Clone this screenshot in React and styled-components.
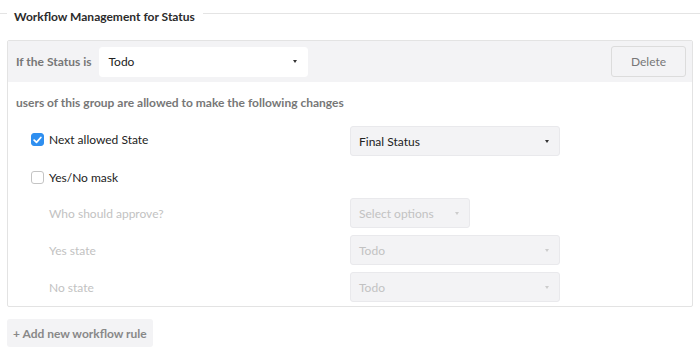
import styled, { createGlobalStyle } from 'styled-components'

const Global = createGlobalStyle`
  body {
    margin: 0;
    background: #fff;
    font-family: 'Lato', 'Open Sans', sans-serif;
    font-size: 12px;
    color: #333;
  }
`

const Page = styled.div`
  width: 700px;
  padding: 0 8px 0 7px;
  box-sizing: border-box;
`

const TitleRow = styled.div`
  display: flex;
  align-items: flex-start;
  margin: 0 -8px 0 -7px;
  height: 27px;
`

const Rule = styled.span`
  flex: ${p => (p.$short ? '0 0 7px' : '1')};
  margin-top: 13px;
  border-top: 1px solid #e4e4e4;
`

const Title = styled.h2`
  margin: 9px 0 0;
  padding: 0 8px 0 7px;
  font-size: 12px;
  font-weight: 700;
  line-height: 15px;
  color: #2b2b2b;
`

const Panel = styled.div`
  margin-top: 13px;
  border: 1px solid #e3e3e3;
  border-radius: 2px;
  width: 686px;
  box-sizing: border-box;
`

const Header = styled.div`
  display: flex;
  align-items: center;
  background: #f3f3f5;
  height: 41px;
  padding: 0 6px 0 8px;
`

const HeaderLabel = styled.span`
  font-weight: 700;
  color: #777;
  margin-right: 8px;
`

const Select = styled.div`
  display: flex;
  align-items: center;
  justify-content: space-between;
  box-sizing: border-box;
  width: ${p => p.$w}px;
  height: 30px;
  padding: 0 10px 0 8px;
  border-radius: 3px;
  background: ${p => (p.$white ? '#fff' : '#f3f3f5')};
  border: 1px solid ${p => (p.$white ? '#fff' : '#e9e9ec')};
  color: ${p => (p.$disabled ? '#c2c2c2' : '#222')};
`

const Caret = styled.span`
  width: 0;
  height: 0;
  border-left: 2.5px solid transparent;
  border-right: 2.5px solid transparent;
  border-top: 3px solid ${p => (p.$disabled ? '#ccc' : '#333')};
`

const DeleteButton = styled.button`
  margin-left: auto;
  width: 75px;
  height: 31px;
  background: #f3f3f5;
  border: 1px solid #dcdcdc;
  border-radius: 3px;
  font-family: inherit;
  font-size: 12px;
  color: #777;
`

const Body = styled.div`
  padding: 13px 8px 4px 8px;
`

const Intro = styled.div`
  font-weight: 700;
  color: #777;
  line-height: 15px;
  margin-bottom: 16px;
`

const Row = styled.div`
  display: grid;
  grid-template-columns: 319px 1fr;
  align-items: center;
  height: 30px;
  margin-bottom: ${p => p.$gap ?? 7}px;
  padding-left: 15px;
`

const CheckLabel = styled.label`
  display: flex;
  align-items: center;
  gap: 5px;
  color: #222;
  margin-top: -3px;
`

const Box = styled.span`
  width: 13px;
  height: 13px;
  box-sizing: border-box;
  border-radius: 3px;
  display: inline-flex;
  align-items: center;
  justify-content: center;
  background: ${p => (p.$on ? '#2f8ff0' : '#fff')};
  border: 1px solid ${p => (p.$on ? '#2f8ff0' : '#c4c4c4')};
`

const SubLabel = styled.div`
  padding-left: 18px;
  color: #c2c2c2;
`

const AddButton = styled.button`
  margin-top: 12px;
  height: 28px;
  padding: 0 6px;
  background: #f3f3f5;
  border: none;
  border-radius: 3px;
  font-family: inherit;
  font-size: 12px;
  font-weight: 700;
  color: #888;
`

const Check = () => (
  <svg width="9" height="8" viewBox="0 0 9 8">
    <path d="M1.2 4.2 L3.5 6.3 L7.8 1.5" fill="none" stroke="#fff" strokeWidth="1.8" strokeLinecap="round" strokeLinejoin="round" />
  </svg>
)

const Dropdown = ({ value, width = 210, white, disabled }) => (
  <Select $w={width} $white={white} $disabled={disabled}>
    <span>{value}</span>
    <Caret $disabled={disabled} />
  </Select>
)

export default function App() {
  return (
    <Page>
      <Global />
      <TitleRow>
        <Rule $short />
        <Title>Workflow Management for Status</Title>
        <Rule />
      </TitleRow>
      <Panel>
        <Header>
          <HeaderLabel>If the Status is</HeaderLabel>
          <Dropdown value="Todo" width={209} white />
          <DeleteButton>Delete</DeleteButton>
        </Header>
        <Body>
          <Intro>users of this group are allowed to make the following changes</Intro>
          <Row $gap={8}>
            <CheckLabel>
              <Box $on><Check /></Box>
              Next allowed State
            </CheckLabel>
            <Dropdown value="Final Status" />
          </Row>
          <Row $gap={4}>
            <CheckLabel>
              <Box />
              Yes/No mask
            </CheckLabel>
          </Row>
          <Row>
            <SubLabel>Who should approve?</SubLabel>
            <Dropdown value="Select options" width={120} disabled />
          </Row>
          <Row>
            <SubLabel>Yes state</SubLabel>
            <Dropdown value="Todo" disabled />
          </Row>
          <Row $gap={0}>
            <SubLabel>No state</SubLabel>
            <Dropdown value="Todo" disabled />
          </Row>
        </Body>
      </Panel>
      <AddButton>+ Add new workflow rule</AddButton>
    </Page>
  )
}
